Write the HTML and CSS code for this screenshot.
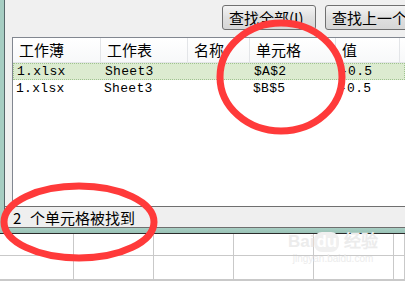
FILE: index.html
```html
<!DOCTYPE html>
<html lang="zh-CN">
  <head>
    <meta charset="UTF-8" />
    <meta name="viewport" content="width=device-width, initial-scale=1.0" />
    <title>查找和替换</title>
    <link rel="stylesheet" href="styles.css">
  </head>
  <body>
    <div class="window">
      <div class="frame">
        <div class="toolbar">
          <button class="btn">查找全部(I)</button>
          <button class="btn btn-cut">查找上一个</button>
        </div>
        <div class="results">
          <div class="row head">
            <div class="cell">工作薄</div>
            <div class="cell">工作表</div>
            <div class="cell">名称</div>
            <div class="cell">单元格</div>
            <div class="cell">值</div>
            <div class="cell"></div>
          </div>
          <div class="row item selected">
            <div class="cell">1.xlsx</div>
            <div class="cell">Sheet3</div>
            <div class="cell"></div>
            <div class="cell">$A$2</div>
            <div class="cell">-0.5</div>
            <div class="cell"></div>
          </div>
          <div class="row item">
            <div class="cell">1.xlsx</div>
            <div class="cell">Sheet3</div>
            <div class="cell"></div>
            <div class="cell">$B$5</div>
            <div class="cell">-0.5</div>
            <div class="cell"></div>
          </div>
        </div>
        <div class="status"><span class="count">2</span>个单元格被找到</div>
      </div>
      <div class="frame-bottom"></div>
    </div>
    <div class="sheet">
      <div></div><div></div><div></div><div></div><div></div><div></div>
      <div></div><div></div><div></div><div></div><div></div><div></div>
      <div></div><div></div><div></div><div></div><div></div><div></div>
    </div>

    <div class="watermark">
      <div class="wm-logo">Bai<span class="wm-du">du</span> 经验</div>
      <div class="wm-url">jingyan.baidu.com</div>
    </div>

    <svg class="marks" width="405" height="281" viewBox="0 0 405 281">
      <ellipse cx="281" cy="77" rx="61" ry="54" fill="none" stroke="#ff3a3a" stroke-width="7" />
      <ellipse cx="79" cy="222" rx="75" ry="36" fill="none" stroke="#ff3a3a" stroke-width="7" />
    </svg>
  </body>
</html>
```

FILE: styles.css
```css
body {
  margin: 0;
  width: 405px;
  height: 281px;
  overflow: hidden;
  position: relative;
  background: #fff;
  font-family: "Noto Sans CJK SC", sans-serif;
  color: #000;
}
.frame {
  height: 228px;
  background: #f0f0f0;
  border-left: 4px solid #a6cdc2;
  box-shadow: inset 1px 0 0 #56676a;
  display: flex;
  flex-direction: column;
  overflow: hidden;
}
.toolbar {
  height: 37px;
  flex-shrink: 0;
  display: flex;
  gap: 9px;
  padding: 5px 0 0 218px;
  box-sizing: border-box;
  overflow: hidden;
}
.btn {
  flex-shrink: 0;
  height: 25px;
  padding: 0 6px;
  border: 1px solid #707070;
  border-radius: 3px;
  background: linear-gradient(#f4f4f4, #e0e0e0 50%, #d6d6d6);
  font-family: "Noto Sans CJK SC", sans-serif;
  font-size: 15px;
  line-height: 21px;
  color: #000;
  text-align: left;
}
.btn:first-child {
  width: 94px;
}
.btn-cut {
  width: 100px;
}
.results {
  height: 169px;
  flex-shrink: 0;
  margin-left: 8px;
  background: #fff;
  border-top: 1px solid #828790;
  border-left: 1px solid #828790;
  box-sizing: border-box;
}
.row {
  display: grid;
  grid-template-columns: 88px 87px 62px 86px 64px 1fr;
}
.head {
  height: 25px;
  background: linear-gradient(#fff, #f7f8f9);
  border-bottom: 1px solid #e3e5e8;
  box-sizing: border-box;
}
.head .cell {
  border-right: 1px solid #e3e5e8;
  padding-left: 6px;
  font-size: 15px;
  line-height: 24px;
}
.item {
  height: 17px;
  box-sizing: border-box;
}
.item .cell {
  padding-left: 3px;
  font-family: "Liberation Mono", "Noto Sans CJK SC", monospace;
  font-size: 13px;
  letter-spacing: 0.3px;
  line-height: 17px;
}
.selected {
  background: #dcebd0;
  border: 1px dotted #9fc38f;
}
.selected .cell {
  line-height: 15px;
}
.status {
  height: 22px;
  flex-shrink: 0;
  background: #efefef;
  border-top: 1px solid #6f6f6f;
  border-bottom: 1px solid #6f6f6f;
  margin-left: 1px;
  padding-left: 8px;
  box-sizing: border-box;
  font-size: 15px;
  line-height: 21px;
}
.count {
  display: inline-block;
  width: 17px;
}
.frame-bottom {
  height: 5px;
  background: linear-gradient(#a9cfc4, #9ac2b6);
  border-bottom: 1px solid #2b2b2b;
}
.sheet {
  display: grid;
  grid-template-columns: 77px 80px 80px 80px 80px 11px;
  grid-template-rows: 22px 24px 1px;
  margin-left: -3px;
}
.sheet div {
  border-right: 1px solid #c9c9c9;
  border-bottom: 1px solid #c9c9c9;
}
.sheet div:nth-child(6n + 1) {
  border-left: 1px solid #c9c9c9;
}
.watermark {
  position: absolute;
  left: 288px;
  top: 232px;
  color: #ececec;
  font-family: "Liberation Sans", sans-serif;
  text-align: center;
}
.wm-logo {
  font-size: 17px;
  font-weight: bold;
  line-height: 20px;
}
.wm-du {
  display: inline-block;
  background: #f0f0f0;
  color: #fff;
  border-radius: 8px;
  padding: 0 2px;
}
.wm-url {
  font-size: 10px;
  line-height: 14px;
}
.marks {
  position: absolute;
  left: 0;
  top: 0;
}
```
